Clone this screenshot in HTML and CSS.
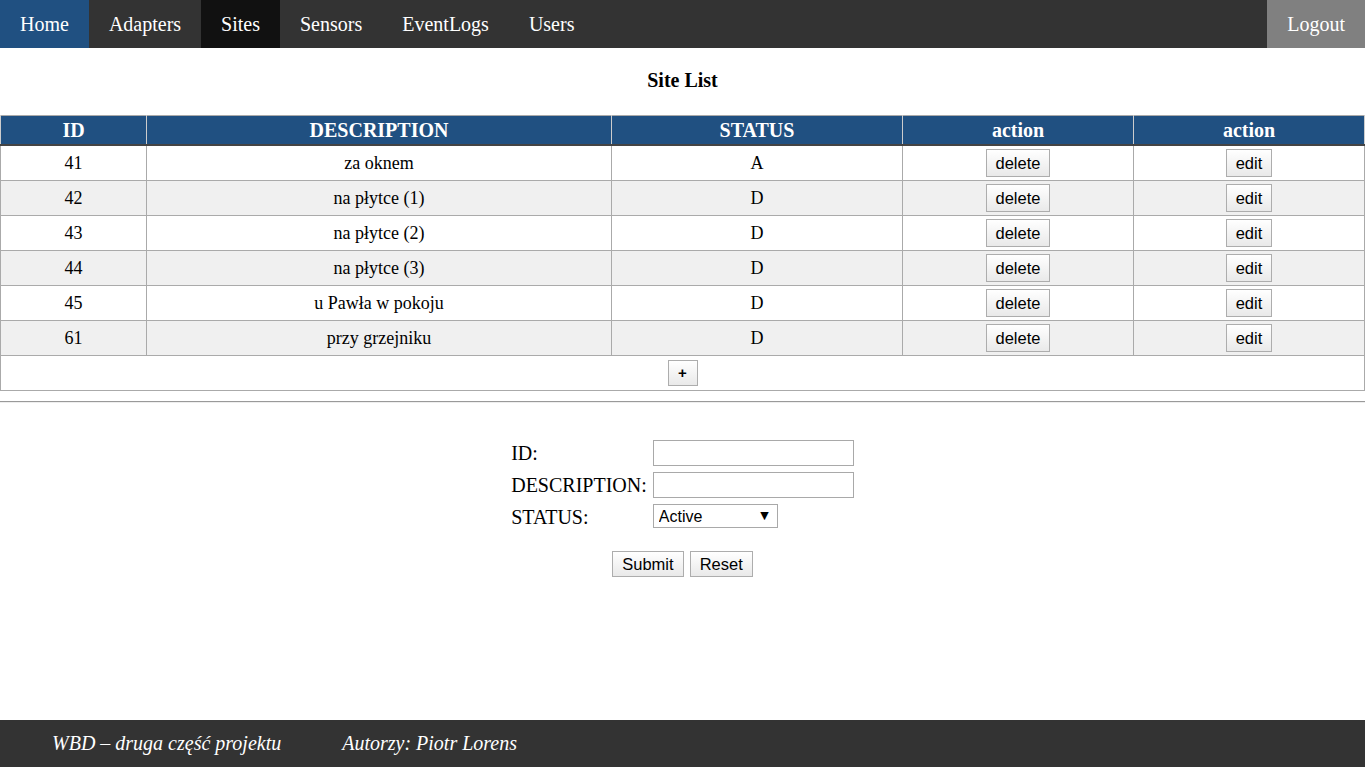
FILE: index.html
```html
<!DOCTYPE html>
<html lang="pl">
<head>
<meta charset="utf-8">
<title>Site List</title>
<link rel="stylesheet" href="styles.css">
</head>
<body>
<div class="page">
  <nav class="topnav">
    <a class="nav-item home" href="#">Home</a>
    <a class="nav-item" href="#">Adapters</a>
    <a class="nav-item active" href="#">Sites</a>
    <a class="nav-item" href="#">Sensors</a>
    <a class="nav-item" href="#">EventLogs</a>
    <a class="nav-item" href="#">Users</a>
    <a class="nav-item logout" href="#">Logout</a>
  </nav>

  <main class="content">
    <h3 class="title">Site List</h3>
    <table class="sites">
      <thead>
        <tr>
          <th class="c-id">ID</th>
          <th class="c-desc">DESCRIPTION</th>
          <th class="c-status">STATUS</th>
          <th class="c-act1">action</th>
          <th class="c-act2">action</th>
        </tr>
      </thead>
      <tbody>
        <tr><td>41</td><td>za oknem</td><td>A</td><td><button class="btn">delete</button></td><td><button class="btn">edit</button></td></tr>
        <tr><td>42</td><td>na płytce (1)</td><td>D</td><td><button class="btn">delete</button></td><td><button class="btn">edit</button></td></tr>
        <tr><td>43</td><td>na płytce (2)</td><td>D</td><td><button class="btn">delete</button></td><td><button class="btn">edit</button></td></tr>
        <tr><td>44</td><td>na płytce (3)</td><td>D</td><td><button class="btn">delete</button></td><td><button class="btn">edit</button></td></tr>
        <tr><td>45</td><td>u Pawła w pokoju</td><td>D</td><td><button class="btn">delete</button></td><td><button class="btn">edit</button></td></tr>
        <tr><td>61</td><td>przy grzejniku</td><td>D</td><td><button class="btn">delete</button></td><td><button class="btn">edit</button></td></tr>
        <tr class="add-row"><td colspan="5"><button class="btn btn-add">+</button></td></tr>
      </tbody>
    </table>
    <hr class="sep">

    <form class="site-form">
      <table class="form-table">
        <tr><td class="lbl">ID:</td><td><input class="field" type="text"></td></tr>
        <tr><td class="lbl">DESCRIPTION:</td><td><input class="field" type="text"></td></tr>
        <tr><td class="lbl">STATUS:</td><td class="sel-cell"><span class="select-wrap"><select class="select"><option>Active</option><option>Disabled</option></select><span class="arrow">▼</span></span></td></tr>
      </table>
      <div class="form-actions">
        <button class="btn btn-form" type="button">Submit</button>
        <button class="btn btn-form" type="reset">Reset</button>
      </div>
    </form>
  </main>

  <footer class="footer">
    <span class="foot-item">WBD – druga część projektu</span>
    <span class="foot-item">Autorzy: Piotr Lorens</span>
  </footer>
</div>
</body>
</html>
```

FILE: styles.css
```css
* { box-sizing: border-box; }

html, body {
  margin: 0;
  padding: 0;
}

body {
  font-family: "Liberation Serif", "Times New Roman", serif;
  color: #000;
  background: #fff;
}

.page {
  min-height: 100vh;
  display: flex;
  flex-direction: column;
}

/* nav */
.topnav {
  display: flex;
  background: #333;
  height: 48px;
}

.nav-item {
  display: block;
  color: #fff;
  text-decoration: none;
  font-size: 20px;
  line-height: 24px;
  padding: 12px 20px;
}

.nav-item.home { background: #205081; }
.nav-item.active { background: #111; }
.nav-item.logout {
  margin-left: auto;
  background: #808080;
}

/* content */
.content {
  flex: 1;
}

.title {
  margin: 0;
  padding: 21px 0 23px;
  font-size: 20px;
  line-height: 23px;
  text-align: center;
  font-weight: bold;
}

.sites {
  width: 100%;
  border-collapse: collapse;
  border: 1px solid #aaa;
  font-size: 18px;
}

.sites th {
  background: #205081;
  color: #fff;
  font-size: 20px;
  line-height: 23px;
  padding: 3px 4px 2px;
  border-left: 1px solid #ccc;
  border-right: 1px solid #ccc;
  border-bottom: 2px solid #444;
  font-weight: bold;
}

.sites .c-id { width: 146px; }
.sites .c-desc { width: 465px; }
.sites .c-status { width: 291px; }
.sites .c-act1 { width: 231px; }

.sites td {
  text-align: center;
  border: 1px solid #aaa;
  padding: 3px 4px;
  height: 35px;
  line-height: 20px;
}

.sites tbody tr:nth-child(even) td { background: #f0f0f0; }
.sites .add-row td { background: #fff; }

.btn {
  font-family: "Liberation Sans", Arial, sans-serif;
  font-size: 16.5px;
  line-height: 20px;
  color: #000;
  background: linear-gradient(#ffffff, #e9e9e9);
  border: 1px solid #adadad;
  border-radius: 0;
  padding: 3px 9px;
  margin: 0;
  cursor: pointer;
  vertical-align: middle;
}

.btn-add {
  width: 30px;
  height: 26px;
  padding: 0;
  font-weight: bold;
  font-size: 15px;
}

.sep {
  margin: 10px 0 0;
  border: 0;
  border-top: 1px solid #9a9a9a;
  border-bottom: 1px solid #eee;
  height: 0;
}

/* form */
.site-form {
  padding-top: 34px;
}

.form-table {
  margin: 0 auto;
  border-collapse: collapse;
}

.form-table td {
  padding: 3px 0;
  height: 32px;
  vertical-align: middle;
}

.form-table .sel-cell {
  padding: 3px 0 5px;
}

.form-table .lbl {
  font-size: 20px;
  width: 141px;
  padding-right: 6px;
  white-space: nowrap;
}

.field {
  display: block;
  width: 201px;
  height: 26px;
  border: 1px solid #a9a9a9;
  padding: 2px 4px;
  font-family: "Liberation Sans", Arial, sans-serif;
  font-size: 16px;
  margin: 0;
}

.select-wrap {
  position: relative;
  display: inline-block;
  vertical-align: middle;
}

.select {
  display: block;
  appearance: none;
  -webkit-appearance: none;
  width: 125px;
  height: 24px;
  border: 1px solid #a9a9a9;
  border-radius: 0;
  background: #fff;
  padding: 0 5px;
  font-family: "Liberation Sans", Arial, sans-serif;
  font-size: 16px;
  color: #000;
  margin: 0;
}

.arrow {
  position: absolute;
  right: 9px;
  top: 5px;
  font-size: 11px;
  line-height: 14px;
  pointer-events: none;
  font-family: "DejaVu Sans", sans-serif;
}

.form-actions {
  text-align: center;
  padding-top: 18px;
}

.btn-form {
  height: 26px;
  padding: 0 9px;
  font-size: 16.5px;
  margin: 0 1px;
}

/* footer */
.footer {
  background: #333;
  color: #fff;
  height: 47px;
  display: flex;
  align-items: center;
  padding-left: 52px;
  gap: 61px;
  font-style: italic;
  font-size: 20px;
}
```
